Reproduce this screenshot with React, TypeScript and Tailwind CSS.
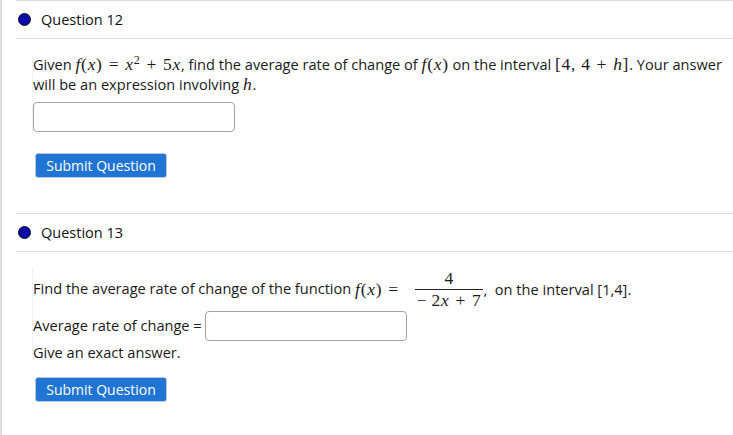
import React from "react";

const sans = "font-['Open_Sans',_'DejaVu_Sans',_sans-serif]";
const math = "font-['Liberation_Serif',_'DejaVu_Serif',_serif]";

function M({ children }: { children: React.ReactNode }) {
  return <span className={`${math} text-[17.5px] leading-[18px] tracking-[0.7px]`}>{children}</span>;
}

function I({ children }: { children: React.ReactNode }) {
  return <span className="italic">{children}</span>;
}

function Op({ children }: { children: React.ReactNode }) {
  return <span className="mx-[6px]">{children}</span>;
}

function Header({ title, tall }: { title: string; tall?: boolean }) {
  return (
    <div className={`flex ${tall ? "h-[38px]" : "h-[37px]"} items-center border-b border-[#d9d9d9] pl-[2px]`}>
      <span className="h-[13px] w-[13px] rounded-full border border-[#111] bg-[#0a0aa8]" />
      <span className="ml-[10px] text-[14.5px] text-[#111]">{title}</span>
    </div>
  );
}

function SubmitButton() {
  return (
    <button className="ml-[3px] h-[25px] w-[132px] rounded-[3px] border border-[#b9c9dc] bg-[#1f74d4] text-[14px] text-white">
      Submit Question
    </button>
  );
}

export default function App() {
  return (
    <div className={`h-[435px] w-[733px] overflow-hidden border-l-2 border-[#dcdcdc] bg-white ${sans} text-[#1a1a1a]`}>
      <div className="pl-[14px]">
        {/* Question 12 */}
        <div className="border-t border-[#dcdcdc]">
          <Header title="Question 12" tall />
          <div className="pl-[16px] pt-[15px]">
            <div className="border-l border-[#f2f2f2]">
              <p className="whitespace-nowrap text-[14.6px] leading-[20px]">
                Given{" "}
                <M>
                  <I>f</I>(<I>x</I>)<Op>=</Op><I>x</I>
                  <sup className="text-[12px]">2</sup>
                  <Op>+</Op>5<I>x</I>
                </M>
                , find the average rate of change of{" "}
                <M>
                  <I>f</I>(<I>x</I>)
                </M>{" "}
                on the interval{" "}
                <M>
                  [4,&nbsp;4<Op>+</Op>
                  <I>h</I>]
                </M>
                . Your answer
                <br />
                will be an expression involving{" "}
                <M>
                  <I>h</I>
                </M>
                .
              </p>
              <div className="pb-[2px] pt-[8px]">
                <input className="h-[30px] w-[202px] rounded-[4px] border border-[#a3a3a3] bg-white" />
              </div>
            </div>
            <div className="pt-[19px]">
              <SubmitButton />
            </div>
          </div>
        </div>

        {/* Question 13 */}
        <div className="mt-[35px] border-t border-[#d9d9d9]">
          <Header title="Question 13" tall />
          <div className="pl-[16px] pt-[15px]">
            <div className="border-l border-[#f2f2f2]">
              <div className="flex h-[44px] items-center text-[14.6px]">
                <span>Find the average rate of change of the function&nbsp;</span>
                <M>
                  <I>f</I>(<I>x</I>)<Op>=</Op>
                </M>
                <span className={`${math} ml-[10px] inline-flex flex-col items-center text-[17.5px] leading-[17px] tracking-[0.7px]`}>
                  <span className="px-[2px] pb-[2px]">4</span>
                  <span className="border-t border-[#222] px-[2px] pt-[2px]">
                    −&thinsp;2<I>x</I>
                    <Op>+</Op>7
                  </span>
                </span>
                <span className="mt-[2px]">,&nbsp;&nbsp;on the interval [1,4].</span>
              </div>
              <div className="flex items-center text-[14.6px]">
                <span>Average rate of change =&nbsp;</span>
                <input className="h-[30px] w-[202px] rounded-[4px] border border-[#a3a3a3] bg-white" />
              </div>
              <p className="pt-[1px] text-[14.6px] leading-[20px]">Give an exact answer.</p>
            </div>
            <div className="pt-[15px]">
              <SubmitButton />
            </div>
          </div>
        </div>
      </div>
    </div>
  );
}
